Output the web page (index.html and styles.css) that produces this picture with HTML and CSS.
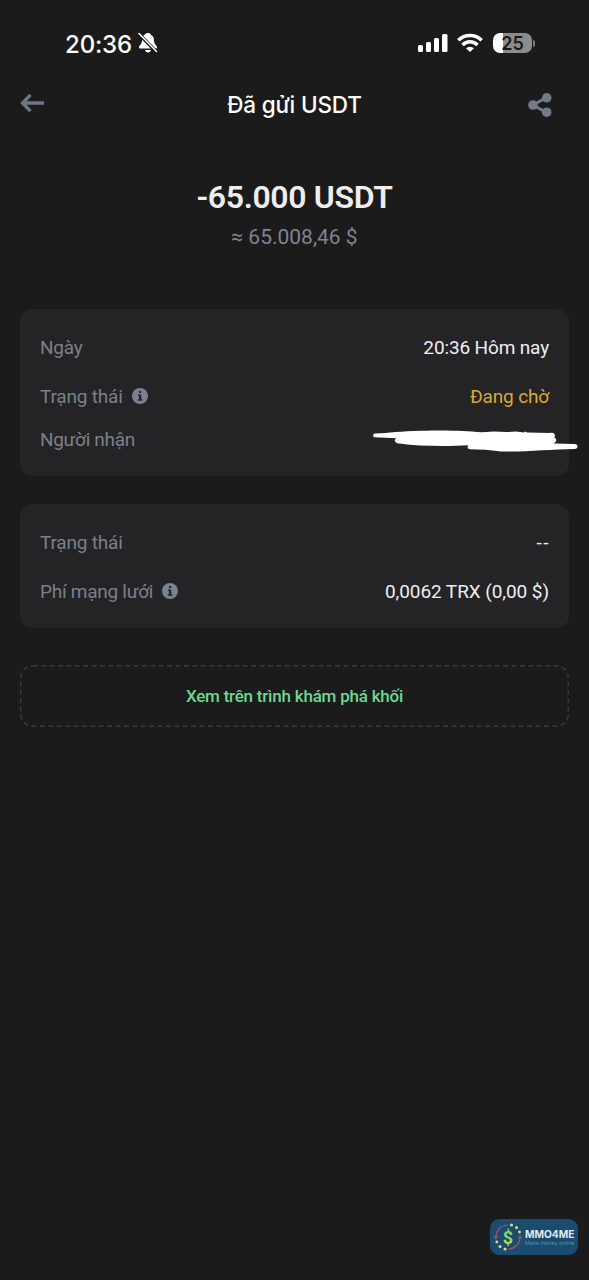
FILE: index.html
```html
<!DOCTYPE html>
<html lang="vi">
<head>
<meta charset="utf-8">
<title>Đã gửi USDT</title>
<link rel="stylesheet" href="styles.css">
</head>
<body>
<div class="screen">
  <div class="status">
    <div class="clock">
      <span class="time">20:36</span>
      <svg width="20" height="22" viewBox="0 0 20 22" fill="#fff">
        <path d="M10 1C7.500 1 7.200 2.500 5.500 3.500 4 5 4 7 4 9c0 3-3 4.500-3 6.500 0 .7.500 1 1 1h16c.5 0 1-.3 1-1C19 13.500 16 12 16 9c0-3-.5-5-3-6C12.300 1.500 11.500 1 10 1zM7 18h6c-.3 1.600-1.500 2.500-3 2.500S7.300 19.600 7 18z"/>
        <path d="M.5 1.500 18.500 20" stroke="#1b1b1b" stroke-width="3.400"/>
        <path d="M1 1.500 18.500 19.500" stroke="#fff" stroke-width="1.500" stroke-linecap="round"/>
      </svg>
    </div>
    <div class="signals">
      <svg width="30" height="20" viewBox="0 0 30 20" fill="#fff">
        <rect x="0" y="12" width="5" height="7" rx="1.500"/><rect x="8" y="9" width="5" height="10" rx="1.500"/><rect x="16" y="5" width="5" height="14" rx="1.500"/><rect x="24" y="1" width="5.500" height="18" rx="1.500"/>
      </svg>
      <svg width="26" height="20" viewBox="0 0 26 20" fill="none" stroke="#fff" stroke-width="3.500">
        <path d="M1.300 7.200a16.800 16.800 0 0 1 23.400 0M5.500 11.900a10.800 10.800 0 0 1 15 0"/><path d="M13 19 9 15.200a5.900 5.900 0 0 1 8 0z" fill="#fff" stroke="none"/>
      </svg>
      <div class="battery"><span>25</span></div>
      <i class="battery-tip"></i>
    </div>
  </div>
  <header class="header">
    <svg width="26" height="20" viewBox="0 0 26 20" fill="none" stroke="#6f7787" stroke-width="3.300">
      <path d="M24 10H3M10.500 1.800 2.500 10l8 8.200"/>
    </svg>
    <h1 class="title">Đã gửi USDT</h1>
    <svg width="26" height="26" viewBox="0 0 26 26" fill="#727a89">
      <path d="M19.500 5.500 6 13l13.500 7.500" fill="none" stroke="#727a89" stroke-width="3"/><circle cx="19.700" cy="5.800" r="4.800"/><circle cx="6" cy="13" r="4.800"/><circle cx="19.700" cy="20.200" r="4.800"/>
    </svg>
  </header>
  <section class="amounts">
    <div class="amount">-65.000 USDT</div>
    <div class="fiat">≈ 65.008,46 $</div>
  </section>
  <section class="card card-main">
    <div class="row"><span class="label">Ngày</span><span class="value">20:36 Hôm nay</span></div>
    <div class="row"><span class="label">Trạng thái</span>
      <svg class="info" width="16" height="16" viewBox="0 0 16 16"><circle cx="8" cy="8" r="8" fill="#7a8292"/><path d="M7 3h2.200v2.100H7zM6 6.400h3.200v4.800h1.100v1.500H5.700v-1.500H7V7.900H6z" fill="#242426"/></svg>
      <span class="value pending">Đang chờ</span></div>
    <div class="row row-recipient"><span class="label recipient">Người nhận</span>
      <svg class="scribble" width="206" height="24" viewBox="0 0 206 24" fill="#fff"><path d="M2 4.500C16 4 27 2.200 49 1.800c29-.9 42 .3 60 1.400l12-.8 12 .7 10-.5 8 1 1-1 2 1 23 .3c6-.4 5 3 4.500 4.500 3 2 2 4.500-1 6.200l21 .3c4 0 4 5 0 5-25 .3-45 2.800-74 2.600-11-1.500-20-2.300-30-2.300-4 0-3-3-2-4-20 1.200-48 1.200-69-1.700-5 0-6-4-3-5.200L2 8.200c-2.500 0-2.500-3.500 0-3.700z"/></svg>
    </div>
  </section>
  <section class="card card-fee">
    <div class="row"><span class="label">Trạng thái</span><span class="value empty">--</span></div>
    <div class="row"><span class="label fee-label">Phí mạng lưới</span>
      <svg class="info" width="16" height="16" viewBox="0 0 16 16"><circle cx="8" cy="8" r="8" fill="#7a8292"/><path d="M7 3h2.200v2.100H7zM6 6.400h3.200v4.800h1.100v1.500H5.700v-1.500H7V7.900H6z" fill="#242426"/></svg>
      <span class="value fee">0,0062 TRX (0,00 $)</span></div>
  </section>
  <div class="explorer">
    <svg class="dashes" width="549" height="62"><rect x=".75" y=".75" width="547.500" height="60.500" rx="12" fill="none" stroke="#3b3b3b" stroke-width="1.400" stroke-dasharray="5 3.400"/></svg>
    <span>Xem trên trình khám phá khối</span>
  </div>
  <footer class="brand">
    <svg width="28" height="30" viewBox="0 0 28 30">
      <defs><linearGradient id="cash" x1="0" x2="0" y1="0" y2="1"><stop offset="0" stop-color="#65cf83"/><stop offset="1" stop-color="#c8dc55"/></linearGradient></defs>
      <g fill="none" stroke="#a45467" stroke-width="1.200"><path d="M14 3C7 3 2 8 1.800 16M14 27c7-.3 12-5 12-12"/><path d="m.3 14 1.500 2.500L4 14.300M24 16.500l2-2.500 1.500 2.500"/></g>
      <g fill="#dadc72"><circle cx="17.500" cy="3" r="1.600"/><circle cx="22.500" cy="5.500" r="1.500"/><circle cx="25.500" cy="10" r="1.400"/><circle cx="2.800" cy="20" r="1.400"/><circle cx="6" cy="24.500" r="1.500"/><circle cx="11" cy="27" r="1.600"/></g>
      <text x="14" y="21.500" text-anchor="middle" class="coin" fill="url(#cash)">$</text>
    </svg>
    <div class="brand-copy"><b>MMO4ME</b><span>Make money online</span></div>
  </footer>
</div>
</body>
</html>
```
FILE: styles.css
```css
* { box-sizing: border-box; }
body { margin: 0; background: #1b1b1b; }
svg { display: block; flex: none; }
.screen { width: 589px; height: 1280px; padding: 0 20px; display: flex; flex-direction: column; background: #1b1b1b; font-family: Roboto, "Noto Sans", sans-serif; color: #eeeef0; white-space: nowrap; }
.status { height: 86px; padding: 0 34px 0 45px; display: flex; align-items: center; justify-content: space-between; font-family: Inter, sans-serif; color: #fff; }
.clock { display: flex; align-items: center; gap: 6px; }
.time { padding-top: 2px; font-size: 24px; font-weight: 500; letter-spacing: -0.150px; }
.signals { display: flex; align-items: center; }
.signals svg + svg { margin-left: 9px; }
.battery { width: 39px; height: 20px; margin-left: 10px; border-radius: 7px; background: linear-gradient(to right, #fff 10px, #8c8c8c 10px); display: flex; align-items: center; justify-content: center; font-size: 18px; font-weight: 600; color: #1b1b1b; }
.battery-tip { width: 2px; height: 7px; margin-left: 1px; border-radius: 0 2px 2px 0; background: #777; }
.header { height: 38px; padding-right: 16px; display: flex; align-items: center; justify-content: space-between; }
.header svg:first-child { margin-top: -4px; }
.title { margin: 0 0 0 16px; font-family: Inter, sans-serif; font-size: 22.500px; line-height: 28px; font-weight: 500; letter-spacing: -0.150px; color: #fff; }
.amounts { height: 185px; padding-top: 53px; text-align: center; }
.amount { font-size: 32px; line-height: 40px; font-weight: 600; letter-spacing: -0.350px; }
.fiat { margin-top: 6px; font-size: 21px; line-height: 28px; color: #7d8493; }
.card { padding: 14px 20px; border-radius: 12px; background: #242426; font-size: 19px; }
.card-main { height: 167px; }
.card-fee { height: 124px; margin-top: 28px; }
.row { height: 49px; display: flex; align-items: center; }
.row-recipient { height: 38px; }
.label { margin-top: -1px; color: #7b808a; letter-spacing: -0.200px; }
.recipient { letter-spacing: -0.300px; }
.fee-label { letter-spacing: -0.270px; }
.info { margin: -2px 0 0 9px; }
.value { margin: -1px 0 0 auto; letter-spacing: -0.140px; }
.fee { letter-spacing: -0.070px; }
.empty { letter-spacing: 1.500px; margin-right: -1px; }
.pending { color: #d9a936; }
.scribble { margin: 2px -30px 0 auto; }
.explorer { position: relative; height: 62px; margin-top: 37px; display: flex; align-items: center; justify-content: center; font-size: 17px; font-weight: 500; letter-spacing: -0.220px; color: #69d993; }
.dashes { position: absolute; inset: 0; }
.brand { width: 88px; height: 36px; margin: auto -9px 25px auto; padding-left: 4px; display: flex; align-items: center; gap: 3px; border-radius: 9px; background: #1c4b70; }
.coin { font: 700 18px Roboto, sans-serif; }
.brand-copy { display: flex; flex-direction: column; color: #e3eaf0; font-family: Inter, sans-serif; font-size: 10.200px; line-height: 11px; }
.brand-copy span { font-size: 5.400px; line-height: 6px; color: #5096a8; }
```
